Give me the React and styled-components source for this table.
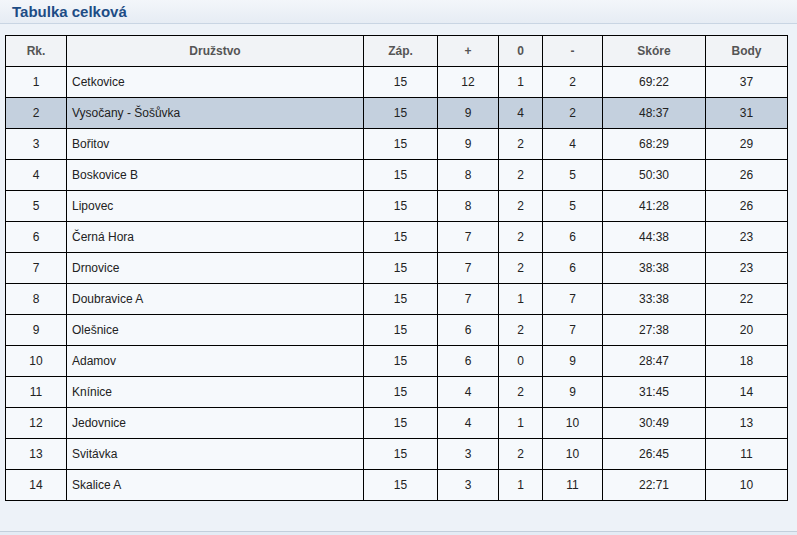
import React from "react";
import styled, { createGlobalStyle } from "styled-components";

const Global = createGlobalStyle`
  html, body { margin: 0; padding: 0; }
  body {
    background: #eef3f9;
    font-family: "Liberation Sans", Arial, sans-serif;
    width: 797px;
    height: 535px;
    overflow: hidden;
  }
`;

const Panel = styled.div`
  display: flex;
  flex-direction: column;
  height: 535px;
  background: #edf2f8;
`;

const TitleBar = styled.div`
  height: 23px;
  display: flex;
  align-items: center;
  padding-left: 12px;
  background: linear-gradient(#f3f6fa, #e6ecf4);
  border-bottom: 1px solid #c9d5e3;
`;

const Title = styled.h2`
  margin: 0;
  font-size: 15px;
  font-weight: bold;
  color: #1d4c85;
`;

const Body = styled.div`
  flex: 1;
  padding: 11px 0 0 5px;
  border-bottom: 1px solid #c3cfdc;
`;

const Footer = styled.div`
  height: 3px;
  background: #e4ecf5;
`;

const Table = styled.table`
  border-collapse: collapse;
  table-layout: fixed;
  width: 782px;
  border: 1px solid #000;
`;

const Th = styled.th`
  height: 30px;
  padding: 0;
  border: 1px solid #000;
  background: #f1f3f6;
  color: #555;
  font-size: 12px;
  font-weight: bold;
  text-align: center;
`;

const Row = styled.tr`
  background: ${(p) => (p.$hl ? "#c4d0de" : "#f6f9fc")};
`;

const Td = styled.td`
  height: 30px;
  padding: ${(p) => (p.$left ? "0 0 0 5px" : "0")};
  border: 1px solid #000;
  color: #222;
  font-size: 12px;
  text-align: ${(p) => (p.$left ? "left" : "center")};
  white-space: nowrap;
`;

const widths = [61, 297, 74, 61, 44, 60, 103, 82];
const heads = ["Rk.", "Družstvo", "Záp.", "+", "0", "-", "Skóre", "Body"];

const rows = [
  [1, "Cetkovice", 15, 12, 1, 2, "69:22", 37],
  [2, "Vysočany - Šošůvka", 15, 9, 4, 2, "48:37", 31],
  [3, "Bořitov", 15, 9, 2, 4, "68:29", 29],
  [4, "Boskovice B", 15, 8, 2, 5, "50:30", 26],
  [5, "Lipovec", 15, 8, 2, 5, "41:28", 26],
  [6, "Černá Hora", 15, 7, 2, 6, "44:38", 23],
  [7, "Drnovice", 15, 7, 2, 6, "38:38", 23],
  [8, "Doubravice A", 15, 7, 1, 7, "33:38", 22],
  [9, "Olešnice", 15, 6, 2, 7, "27:38", 20],
  [10, "Adamov", 15, 6, 0, 9, "28:47", 18],
  [11, "Knínice", 15, 4, 2, 9, "31:45", 14],
  [12, "Jedovnice", 15, 4, 1, 10, "30:49", 13],
  [13, "Svitávka", 15, 3, 2, 10, "26:45", 11],
  [14, "Skalice A", 15, 3, 1, 11, "22:71", 10],
];

export default function App() {
  return (
    <>
      <Global />
      <Panel>
        <TitleBar>
          <Title>Tabulka celková</Title>
        </TitleBar>
        <Body>
          <Table>
            <colgroup>
              {widths.map((w, i) => (
                <col key={i} style={{ width: w }} />
              ))}
            </colgroup>
            <thead>
              <tr>
                {heads.map((h) => (
                  <Th key={h}>{h}</Th>
                ))}
              </tr>
            </thead>
            <tbody>
              {rows.map((r) => (
                <Row key={r[0]} $hl={r[0] === 2}>
                  {r.map((c, i) => (
                    <Td key={i} $left={i === 1}>
                      {c}
                    </Td>
                  ))}
                </Row>
              ))}
            </tbody>
          </Table>
        </Body>
        <Footer />
      </Panel>
    </>
  );
}
